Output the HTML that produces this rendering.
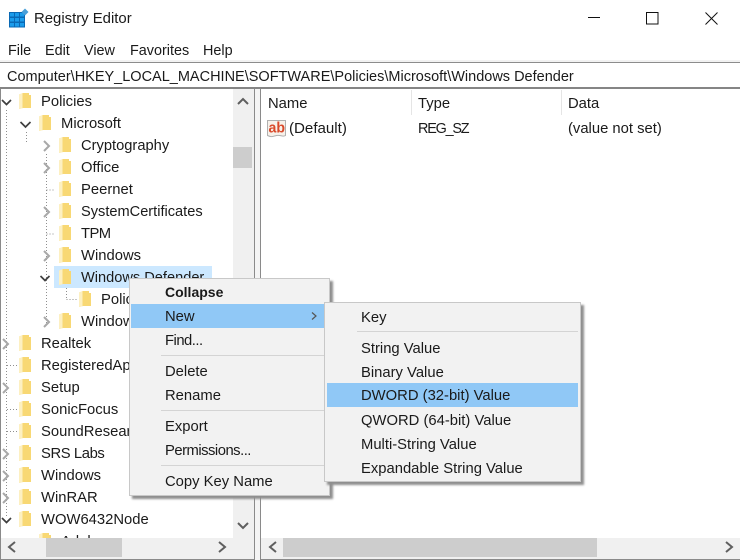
<!DOCTYPE html>
<html><head><meta charset="utf-8"><title>Registry Editor</title>
<style>
html,body{margin:0;padding:0;background:#fff}
#w{position:relative;width:740px;height:560px;overflow:hidden;background:#fff;font:14.8px/24px "Liberation Sans",sans-serif;color:#1a1a1a}
#w div{position:absolute;white-space:nowrap}
.m{line-height:26px;left:35px}
.sep{height:1px;background:#d4d4d4}
svg{position:absolute;left:0;top:0;overflow:visible}
</style></head><body>
<div id="w">
<svg width="740" height="60" style="left:0;top:0">
<rect x="9" y="12" width="16" height="15.500" fill="#0a69b4"/>
<g fill="#1c9ceb"><rect x="10" y="13" width="4" height="3.500"/><rect x="15" y="13" width="4" height="3.500"/><rect x="20" y="13" width="4" height="3.500"/><rect x="10" y="18" width="4" height="3.500"/><rect x="15" y="18" width="4" height="3.500"/><rect x="20" y="18" width="4" height="3.500"/><rect x="10" y="23" width="4" height="3.500"/><rect x="15" y="23" width="4" height="3.500"/><rect x="20" y="23" width="4" height="3.500"/></g>
<path d="M25 8.500l3.500 3.500-3.500 3.500-3.500-3.500z" fill="#4a9fd8"/>
<path d="M588 17.500h12" stroke="#111" fill="none"/>
<rect x="646.500" y="12.500" width="11.500" height="11.500" stroke="#111" fill="none"/>
<path d="M705.500 12.500l12 12M717.500 12.500l-12 12" stroke="#111" fill="none"/>
</svg>
<div style="left:34px;top:7px;font-size:14.9px">Registry Editor</div>
<div style="left:8px;top:39px;font-size:14.4px">File</div>
<div style="left:45px;top:39px;font-size:14.4px">Edit</div>
<div style="left:84px;top:39px;font-size:14.4px">View</div>
<div style="left:130px;top:39px;font-size:14.4px">Favorites</div>
<div style="left:203px;top:39px;font-size:14.4px">Help</div>

<div style="left:0;top:60px;width:740px;height:2px;background:#f2f2f2"></div>
<div style="left:0;top:62px;width:740px;height:1px;background:#8c8c8c"></div>
<div style="left:7px;top:65px;font-size:14.5px">Computer\HKEY_LOCAL_MACHINE\SOFTWARE\Policies\Microsoft\Windows Defender</div>
<div style="left:0;top:87px;width:740px;height:2px;background:#858585"></div>
<div style="left:255px;top:89px;width:5px;height:471px;background:#f4f4f4"></div>

<!-- left pane -->
<div style="left:0;top:89px;width:1px;height:470px;background:#8a8a8a"></div>
<div style="left:254px;top:89px;width:1px;height:470px;background:#8a8a8a"></div>
<div style="left:0;top:559px;width:255px;height:1px;background:#8a8a8a"></div>

<div style="left:1px;top:89px;width:232px;height:449px;overflow:hidden;line-height:26px">
<div style="left:53px;top:177px;width:158px;height:22px;background:#cce8ff"></div>
<svg width="232" height="538" style="left:-1px;top:-89px">
<defs><g id="f"><path d="M0 1.500L4 0h6v2h2v13H4l-4 1z" fill="#f8d874"/><path d="M0 1.500L3.500 .3v15L0 16z" fill="#fdf0c2"/></g></defs>
<g stroke="#8f8f8f" stroke-dasharray="1 2" fill="none">
<path d="M6.500 110v408M26.500 132v10M46.500 154v170M46.500 190h8M46.500 234h8M66.500 288v11M66.500 299.500h12M7 365.500h12M7 409.500h12M7 431.500h12"/>
</g>
<g transform="translate(0,-1)">
<use href="#f" x="19" y="94"/><use href="#f" x="39" y="116"/>
<use href="#f" x="59" y="138"/><use href="#f" x="59" y="160"/><use href="#f" x="59" y="182"/><use href="#f" x="59" y="204"/><use href="#f" x="59" y="226"/><use href="#f" x="59" y="248"/><use href="#f" x="59" y="270"/><use href="#f" x="79" y="292"/><use href="#f" x="59" y="314"/>
<use href="#f" x="19" y="336"/><use href="#f" x="19" y="358"/><use href="#f" x="19" y="380"/><use href="#f" x="19" y="402"/><use href="#f" x="19" y="424"/><use href="#f" x="19" y="446"/><use href="#f" x="19" y="468"/><use href="#f" x="19" y="490"/><use href="#f" x="19" y="512"/><use href="#f" x="39" y="534"/>
</g>
<g fill="none" stroke="#3f3f3f" stroke-width="1.700">
<path d="M2 100l4.500 4.500 4.500-4.500M20.500 122l5 5 5-5M40.500 276l4.500 4.500 4.500-4.500M2 518l4.500 4.500 4.500-4.500"/>
</g>
<g fill="none" stroke="#a8a8a8" stroke-width="2">
<path d="M44 141l5 5-5 5M44 163l5 5-5 5M44 207l5 5-5 5M44 251l5 5-5 5M44 317l5 5-5 5M3 339l5 5-5 5M3 383l5 5-5 5M3 449l5 5-5 5M3 471l5 5-5 5M3 493l5 5-5 5"/>
</g>
</svg>
<div style="left:40px;top:0">Policies</div>
<div style="left:60px;top:22px">Microsoft</div>
<div style="left:80px;top:44px;font-size:14.700px">Cryptography</div>
<div style="left:80px;top:66px">Office</div>
<div style="left:80px;top:88px">Peernet</div>
<div style="left:80px;top:110px;font-size:14.600px">SystemCertificates</div>
<div style="left:80px;top:132px;letter-spacing:-.6px">TPM</div>
<div style="left:80px;top:154px">Windows</div>
<div style="left:80px;top:176px;font-size:14.600px">Windows Defender</div>
<div style="left:100px;top:198px">Policy Manager</div>
<div style="left:80px;top:220px">Windows Search</div>
<div style="left:40px;top:242px">Realtek</div>
<div style="left:40px;top:264px">RegisteredApplications</div>
<div style="left:40px;top:286px">Setup</div>
<div style="left:40px;top:308px">SonicFocus</div>
<div style="left:40px;top:330px">SoundResearch</div>
<div style="left:40px;top:352px;letter-spacing:-.4px">SRS Labs</div>
<div style="left:40px;top:374px">Windows</div>
<div style="left:40px;top:396px">WinRAR</div>
<div style="left:40px;top:418px">WOW6432Node</div>
<div style="left:60px;top:440px">Adobe</div>
</div>

<!-- left scrollbars -->
<div style="left:233px;top:89px;width:21px;height:449px;background:#f0f0f0"></div>
<div style="left:233px;top:147px;width:19px;height:21px;background:#cdcdcd"></div>
<div style="left:1px;top:538px;width:253px;height:21px;background:#f0f0f0"></div>
<div style="left:46px;top:538px;width:76px;height:19px;background:#cdcdcd"></div>

<!-- right pane -->
<div style="left:260px;top:89px;width:1px;height:470px;background:#8a8a8a"></div>
<div style="left:260px;top:559px;width:480px;height:1px;background:#8a8a8a"></div>
<div style="left:268px;top:92px">Name</div>
<div style="left:418px;top:92px">Type</div>
<div style="left:568px;top:92px">Data</div>
<div style="left:411px;top:90px;width:1px;height:25px;background:#e5e5e5"></div>
<div style="left:561px;top:90px;width:1px;height:25px;background:#e5e5e5"></div>
<div style="left:289px;top:117px;font-size:15.100px">(Default)</div>
<div style="left:418px;top:117px;font-size:14.400px;letter-spacing:-1.200px">REG_SZ</div>
<div style="left:568px;top:117px">(value not set)</div>
<div style="left:261px;top:538px;width:479px;height:21px;background:#f0f0f0"></div>
<div style="left:283px;top:538px;width:314px;height:19px;background:#cdcdcd"></div>

<svg width="740" height="560" style="pointer-events:none">
<path d="M267.500 120.500h18v15c-3 2-5-1-9 0s-5 2-9 0z" fill="#f7f1ea" stroke="#b0b0b0"/>
<text x="268.500" y="132.500" font-family="Liberation Sans" font-weight="bold" font-size="15" fill="#d9492a" textLength="16.500" lengthAdjust="spacingAndGlyphs">ab</text>
<g fill="none" stroke="#5f5f5f" stroke-width="2">
<path d="M238 104l5-5 5 5M238 523l5 5 5-5M15 542l-6 5 6 5M219 542l6 5-6 5M276 542l-6 5 6 5M726 542l6 5-6 5"/>
</g>
</svg>

<!-- context menu -->
<div style="left:129px;top:278px;width:199px;height:216px;background:#f2f2f2;border:1px solid #c8c8c8;box-shadow:3px 3px 2px #8f8f8f">
<div style="left:1px;top:25px;width:195px;height:24px;background:#90c8f6"></div>
<div class="m" style="top:0;font-weight:bold;font-size:14px">Collapse</div>
<div class="m" style="top:25px">New</div>
<div class="m" style="top:49px;letter-spacing:-.5px">Find...</div>
<div class="sep" style="left:31px;top:76px;width:168px"></div>
<div class="m" style="top:80px">Delete</div>
<div class="m" style="top:104px">Rename</div>
<div class="sep" style="left:31px;top:131px;width:168px"></div>
<div class="m" style="top:135px">Export</div>
<div class="m" style="top:159px;letter-spacing:-.5px">Permissions...</div>
<div class="sep" style="left:31px;top:186px;width:168px"></div>
<div class="m" style="top:190px">Copy Key Name</div>
</div>
<svg width="740" height="560"><path d="M312 312.500l4 3.500-4 3.500" fill="none" stroke="#555" stroke-width="1.200"/></svg>

<!-- submenu -->
<div style="left:324px;top:302px;width:255px;height:178px;background:#f2f2f2;border:1px solid #c8c8c8;box-shadow:3px 3px 2px #8f8f8f">
<div style="left:2px;top:80px;width:251px;height:24px;background:#90c8f6"></div>
<div class="m" style="left:36px;top:2px">Key</div>
<div class="sep" style="left:32px;top:28px;width:221px"></div>
<div class="m" style="left:36px;top:33px">String Value</div>
<div class="m" style="left:36px;top:57px">Binary Value</div>
<div class="m" style="left:36px;top:80px">DWORD (32-bit) Value</div>
<div class="m" style="left:36px;top:105px">QWORD (64-bit) Value</div>
<div class="m" style="left:36px;top:129px">Multi-String Value</div>
<div class="m" style="left:36px;top:153px">Expandable String Value</div>
</div>
</div>
</body></html>
